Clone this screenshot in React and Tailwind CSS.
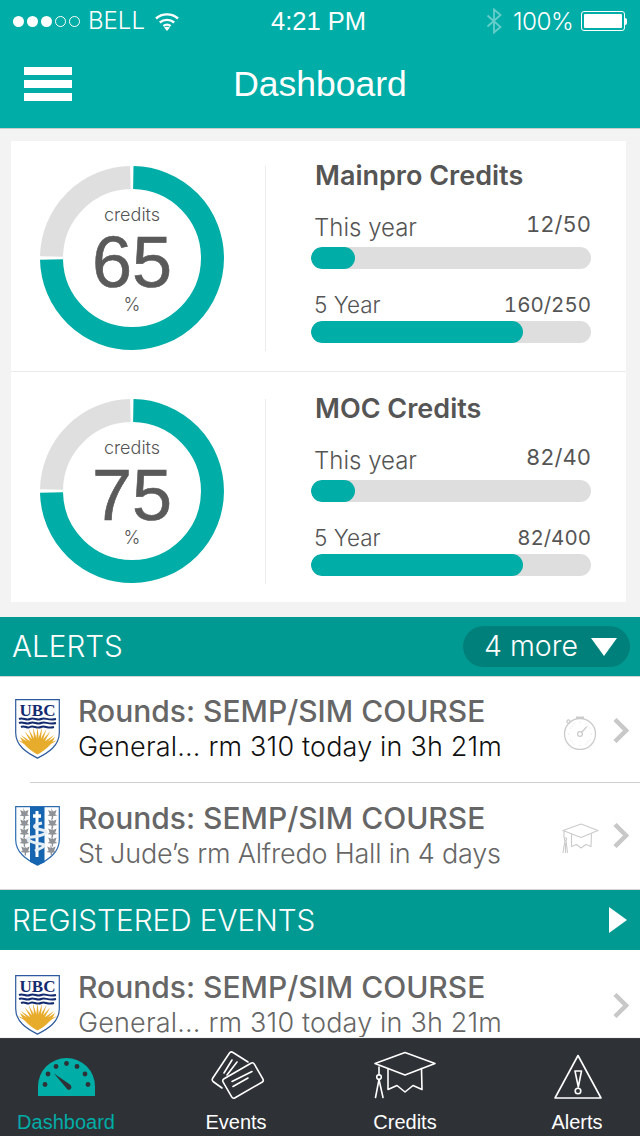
const sans = { fontFamily: '"Liberation Sans", Arial, sans-serif' };
const inter = { fontFamily: 'Inter, "Liberation Sans", sans-serif' };

function Wifi() {
  return (
    <svg width="24" height="19" viewBox="0 0 24 19" fill="none" stroke="white" strokeWidth="2.4">
      <path d="M1 6.500C7 1 17 1 23 6.500" />
      <path d="M4.800 10.500C9 7 15 7 19.200 10.500" />
      <path d="M8.400 14C10.500 12.400 13.500 12.400 15.600 14" />
      <path d="M12 19l-3-3.600c2-1 4-1 6 0z" fill="white" stroke="none" />
    </svg>
  );
}

function StatusBar() {
  return (
    <div className="flex items-center h-[42px] pl-[13px] text-white relative">
      <div className="flex gap-[3px] w-[70px]">
        <span className="w-[11px] h-[11px] rounded-full bg-white" />
        <span className="w-[11px] h-[11px] rounded-full bg-white" />
        <span className="w-[11px] h-[11px] rounded-full bg-white" />
        <span className="w-[11px] h-[11px] rounded-full border border-white" />
        <span className="w-[11px] h-[11px] rounded-full border border-white" />
      </div>
      <span className="ml-[5px] w-[67px] text-[24px] font-light" style={inter}>BELL</span>
      <Wifi />
      <span className="ml-[92px] w-[215px] text-[25.500px]">4:21 PM</span>
      <svg className="w-[16px] h-[26px] opacity-40" viewBox="0 0 16 26" fill="none" stroke="white" strokeWidth="1.8">
        <path d="M1.500 7.500l13 11.500-6.500 5.500V1.500l6.500 5.500-13 11.500" />
      </svg>
      <span className="ml-[11px] w-[68px] text-[24.300px] font-light tracking-[-0.5px]" style={inter}>100%</span>
      <div className="w-[44px] h-[20px] border border-white rounded-[3px] p-[2px]">
        <div className="w-full h-full bg-white rounded-[1px]" />
      </div>
      <div className="w-[2px] h-[7px] bg-white rounded-r-sm" />
    </div>
  );
}

function NavBar() {
  return (
    <div className="relative flex items-center justify-center h-[86px]">
      <div className="absolute left-[24px] top-[25px] flex flex-col gap-[5px]">
        <span className="block w-[48px] h-[8px] bg-white" />
        <span className="block w-[48px] h-[8px] bg-white" />
        <span className="block w-[48px] h-[8px] bg-white" />
      </div>
      <h1 className="text-white text-[35.500px] font-normal">Dashboard</h1>
    </div>
  );
}

function Donut({ value }) {
  return (
    <div className="relative w-[184px] h-[184px] shrink-0">
      <svg width="184" height="184" viewBox="0 0 184 184" fill="none" strokeWidth="23">
        <path d="M93.300 11.500A80.500 80.500 0 1 1 11.500 93.600" stroke="#00ada7" />
        <path d="M11.500 90.400A80.500 80.500 0 0 1 90.400 11.500" stroke="#e0dfdf" />
      </svg>
      <div className="absolute inset-0 flex flex-col items-center text-[#5a5a5a]">
        <span className="mt-[37px] h-[24px] leading-[24px] text-[18px] font-light text-[#555]" style={inter}>credits</span>
        <span className="h-[66px] leading-[70px] text-[72px] [-webkit-text-stroke:0.6px_#5a5a5a]">{value}</span>
        <span className="h-[24px] leading-[24px] text-[18px] font-light text-[#555]" style={inter}>%</span>
      </div>
    </div>
  );
}

function Bar({ fill }) {
  return (
    <div className="h-[22px] rounded-full bg-[#dfdede] overflow-hidden">
      <div className={`h-full rounded-full bg-[#00ada7] ${fill}`} />
    </div>
  );
}

function CreditRow({ title, value, year, five, rowClass }) {
  return (
    <div className={`flex pl-[29px] ${rowClass}`}>
      <Donut value={value} />
      <div className="ml-[41px] w-px h-[185px] bg-[#ececec]" />
      <div className="ml-[45px] w-[280px]" style={inter}>
        <div className="ml-[4px] h-[24px] leading-[20px] text-[27px] font-semibold text-[#555]">{title}</div>
        <div className="flex justify-between items-end h-[57px]">
          <span className="ml-[3px] mb-[4px] text-[24px] leading-[30px] font-light text-[#555]">This year</span>
          <span className="mb-[11px] text-[22px] leading-[24px] tabular-nums text-[#555]">{year}</span>
        </div>
        <Bar fill="w-[44px]" />
        <div className="flex justify-between items-end h-[52px]">
          <span className="ml-[3px] mb-[1px] text-[22.500px] leading-[30px] font-light text-[#555]">5 Year</span>
          <span className="mb-[1px] text-[20.500px] leading-[30px] tabular-nums text-[#555]">{five}</span>
        </div>
        <Bar fill="w-[212px]" />
      </div>
    </div>
  );
}

const rays = [-66, -50, -36, -24, -12, 0, 12, 24, 36, 50, 66];

function UbcCrest() {
  return (
    <svg width="45" height="60" viewBox="0 0 45 60" className="shrink-0">
      <path d="M.7.7h43.600v33c0 13-11 20-21.800 25.400C11.700 53.700.7 46.700.7 33.700z" fill="white" stroke="#2c5a9e" strokeWidth="1.200" />
      <text x="22.500" y="16.500" textAnchor="middle" fontSize="17" fontWeight="700" fill="#122b6e" textLength="36" lengthAdjust="spacingAndGlyphs" style={{ fontFamily: '"Liberation Serif", serif' }}>UBC</text>
      <g fill="none" stroke="#122b6e" strokeWidth="2">
        <path d="M4 20c4-2 7 2 11 0s7 2 11 0 7 2 15 0" />
        <path d="M4 24c4-2 7 2 11 0s7 2 11 0 7 2 15 0" />
        <path d="M6 28c4-2 6 2 9 0s7 2 11 0 6 2 13 0" />
      </g>
      {rays.map((a) => (
        <path key={a} d="M-2.400 0L0 -22L2.400 0z" fill="#e8ac2c" transform={`translate(22.500 50) rotate(${a})`} />
      ))}
      <path d="M5 38c3 2 6 4 9 5l2-3h13l2 3c3-1 6-3 9-5-3 7-9 13-17.500 17.500C14 51 8 45 5 38z" fill="#e8ac2c" />
    </svg>
  );
}

function Leaf({ x, y }) {
  return <path transform={`translate(${x} ${y}) scale(1.400)`} d="M0-4l1.500 2.500 2.500-1-1 3 1.500 1-3 .5v2h-1v-2l-3-.5 1.500-1-1-3 2.500 1z" fill="#8f9296" />;
}

function MedCrest() {
  return (
    <svg width="45" height="60" viewBox="0 0 45 60" className="shrink-0">
      <path d="M.7.7h43.600v33c0 13-11 20-21.800 25.400C11.700 53.700.7 46.700.7 33.700z" fill="white" stroke="#2c6cb0" strokeWidth="1.200" />
      <path d="M15 1h14.500v55.500l-7 2.500-7.500-3z" fill="#1565b0" />
      <Leaf x="8" y="7.500" /><Leaf x="36" y="7.500" />
      <Leaf x="8" y="17" /><Leaf x="36" y="17" />
      <Leaf x="8" y="26" /><Leaf x="36" y="26" />
      <Leaf x="8" y="35" /><Leaf x="36" y="35" />
      <Leaf x="9" y="44" /><Leaf x="35" y="44" />
      <path d="M22 5v46" stroke="white" strokeWidth="3" />
      <path d="M18 10h8" stroke="white" strokeWidth="3.500" />
      <path d="M27 17c-10 2-10 5 0 7s0 6-10 7 0 6 9 7-4 6-6 7" fill="none" stroke="#e5eef5" strokeWidth="3" />
    </svg>
  );
}

function Stopwatch() {
  return (
    <svg width="36" height="36" viewBox="0 0 36 36" fill="none" stroke="#cbcbcb" strokeWidth="1.300">
      <circle cx="18" cy="20" r="15.500" />
      <path d="M14 3.500h8M18 3.500v1" strokeWidth="2" />
      <circle cx="6.500" cy="7.500" r="1.600" />
      <circle cx="18" cy="20" r="2.400" />
      <path d="M19.700 18.200l5-5.500" />
      <path d="M18 8.500v.5M18 31v.5M6.500 20h.5M29 20h.5M10 12l.4.4M25.600 12l.4.4M10 28l.4-.4M25.600 28l.4-.4M12 9.800l.2.4M24 9.800l-.2.4M8 14l.4.2M28 14l-.4.2M8 26l.4-.2M28 26l-.4-.2M12 30.200l.2-.4M24 30.200l-.2-.4" strokeWidth="1.200" />
    </svg>
  );
}

function SmallCap() {
  return (
    <svg width="37" height="31" viewBox="0 0 37 31" fill="none" stroke="#cbcbcb" strokeWidth="1.100" strokeLinejoin="round">
      <path d="M19 1l17 6.500-17 7-18-7z" />
      <path d="M9.500 10.500v13l5-2 4.500 3.500 5-3.500 5 2 .5-13" />
      <circle cx="3.500" cy="16" r="1.200" />
      <path d="M2 8v7M3 17l-2 13M4 17l1.500 13M3.500 20v10" />
    </svg>
  );
}

function Chevron() {
  return (
    <svg width="16" height="25" viewBox="0 0 16 25" fill="none" stroke="#c8c8c8" strokeWidth="4.500" className="shrink-0">
      <path d="M2 1.500l11 11-11 11" />
    </svg>
  );
}

function EventRow({ crest, icon, sub, subTone, rowClass, crestClass, iconBox, chevClass }) {
  return (
    <div className={`relative flex pl-[15px] bg-white ${rowClass}`}>
      <div className={crestClass}>{crest}</div>
      <div className="ml-[18px] whitespace-nowrap" style={inter}>
        <div className="text-[30px] leading-[36px] font-medium text-[#666]">Rounds: SEMP/SIM COURSE</div>
        <div className={`text-[27px] leading-[36px] font-light ${subTone}`}>{sub}</div>
      </div>
      {icon && <div className={`absolute ${iconBox}`}>{icon}</div>}
      <div className={`absolute left-[613px] ${chevClass}`}><Chevron /></div>
    </div>
  );
}

function TabIcon({ children, box }) {
  return (
    <svg width="120" height="56" viewBox={box} fill="none" stroke="white" strokeWidth="1.600" strokeLinejoin="round" strokeLinecap="round">
      {children}
    </svg>
  );
}

function TabBar() {
  return (
    <div className="flex h-[98px] shrink-0 bg-[#2e3136] border-t border-[#3b3e43] pl-[6px] pt-[8px] text-[20px] text-white">
      <div className="w-[120px] flex flex-col items-center text-[#00ada7]">
        <TabIcon box="6 17 120 56">
          <path d="M38 66v-9.500a28.500 28.500 0 0 1 57 0V66z" fill="#00ada7" stroke="none" />
          <g fill="#2e3136" stroke="none">
            <circle cx="45" cy="54.500" r="2.400" /><circle cx="48" cy="44" r="2.400" /><circle cx="56" cy="36.500" r="2.400" />
            <circle cx="66.500" cy="33.500" r="2.400" /><circle cx="77" cy="36.500" r="2.400" /><circle cx="85" cy="44" r="2.400" /><circle cx="88" cy="54.500" r="2.400" />
            <path d="M54 43.500l16 11c3 2.500.5 6.500-2.500 5z" />
          </g>
        </TabIcon>
        <span className="mt-[7px] leading-[24px]">Dashboard</span>
      </div>
      <div className="ml-[50px] w-[120px] flex flex-col items-center">
        <TabIcon box="176 17 120 56">
          <rect x="225" y="39.500" width="36" height="22" rx="2.500" transform="rotate(-30 243 50.500)" />
          <path d="M248 32l-15-9.500q-2-1.500-3.500.5l-17 25.500q-1 1.500.5 3l9 6.500" />
          <path d="M232 51.500l20-10M233 56.500l15-8.500" />
          <path d="M224 43l8-13M227 45l10-13" />
        </TabIcon>
        <span className="mt-[7px] leading-[24px]">Events</span>
      </div>
      <div className="ml-[49px] w-[120px] flex flex-col items-center">
        <TabIcon box="345 17 120 56">
          <path d="M405 22.500l30 11-30 11.500-30-11.500z" />
          <path d="M388 38.500v21l9-4 8 6.500 8-6.500 9 4-.5-21" />
          <path d="M379 37v8" />
          <circle cx="379" cy="47" r="2.300" />
          <path d="M379 49.500l-3.500 18M379 49.500l4 18" />
        </TabIcon>
        <span className="mt-[7px] leading-[24px]">Credits</span>
      </div>
      <div className="ml-[52px] w-[120px] flex flex-col items-center">
        <TabIcon box="517 17 120 56">
          <path d="M578 25.500l23 42.500h-46z" />
          <path d="M575 41h6.500l-3.200 16z" />
          <circle cx="578" cy="61" r="2.800" />
        </TabIcon>
        <span className="mt-[7px] leading-[24px]">Alerts</span>
      </div>
    </div>
  );
}

export default function App() {
  return (
    <div className="w-[640px] h-[1136px] flex flex-col overflow-hidden bg-[#f3f3f3]" style={sans}>
      <header className="h-[129px] shrink-0 bg-[#00ada7] border-b border-[#c9cccc]">
        <StatusBar />
        <NavBar />
      </header>

      <main className="flex-1 min-h-0 overflow-hidden">
        <section className="mx-[11px] mt-[12px] w-[615px] bg-white">
          <CreditRow title="Mainpro Credits" value="65" year="12/50" five="160/250" rowClass="h-[231px] pt-[25px] border-b border-[#eaeaea]" />
          <CreditRow title="MOC Credits" value="75" year="82/40" five="82/400" rowClass="h-[230px] pt-[27px]" />
        </section>

        <div className="mt-[15px] h-[60px] bg-[#009a93] border-b border-[#d0d4d4] flex items-center justify-between pl-[12px] pr-[10px] text-white" style={inter}>
          <span className="text-[29.700px] font-light">ALERTS</span>
          <div className="flex items-center w-[167px] h-[41px] rounded-full bg-[#00807a] pl-[21px] text-[28.500px] font-light">
            <span className="w-[107px]">4 more</span>
            <svg width="26" height="18" viewBox="0 0 26 18"><path d="M0 0h26L13 18z" fill="white" /></svg>
          </div>
        </div>

        <EventRow
          crest={<UbcCrest />}
          icon={<Stopwatch />}
          sub="General... rm 310 today in 3h 21m"
          subTone="text-[#111] tracking-[0.17px]"
          rowClass="h-[105px] pt-[16px]"
          crestClass="pt-[6px]"
          iconBox="left-[562px] top-[37px]"
          chevClass="top-[41px]"
        />
        <div className="bg-white pl-[30px]"><div className="h-px bg-[#cfcfcf]" /></div>
        <EventRow
          crest={<MedCrest />}
          icon={<SmallCap />}
          sub="St Jude’s rm Alfredo Hall in 4 days"
          subTone="text-[#666] tracking-[-0.2px]"
          rowClass="h-[106px] pt-[17px]"
          crestClass="pt-[6px]"
          iconBox="left-[562px] top-[40px]"
          chevClass="top-[40px]"
        />

        <div className="h-[61px] bg-[#009a93] border-t border-[#d0d4d4] flex items-center justify-between pl-[12px] pr-[13px] text-white" style={inter}>
          <span className="text-[29.700px] font-light">REGISTERED EVENTS</span>
          <svg width="18" height="26" viewBox="0 0 18 26"><path d="M0 0l18 13L0 26z" fill="white" /></svg>
        </div>

        <EventRow
          crest={<UbcCrest />}
          sub="General... rm 310 today in 3h 21m"
          subTone="text-[#666] tracking-[0.17px]"
          rowClass="h-[87px] pt-[19px] overflow-hidden"
          crestClass="pt-[6px]"
          chevClass="top-[43px]"
        />
      </main>

      <TabBar />
    </div>
  );
}
